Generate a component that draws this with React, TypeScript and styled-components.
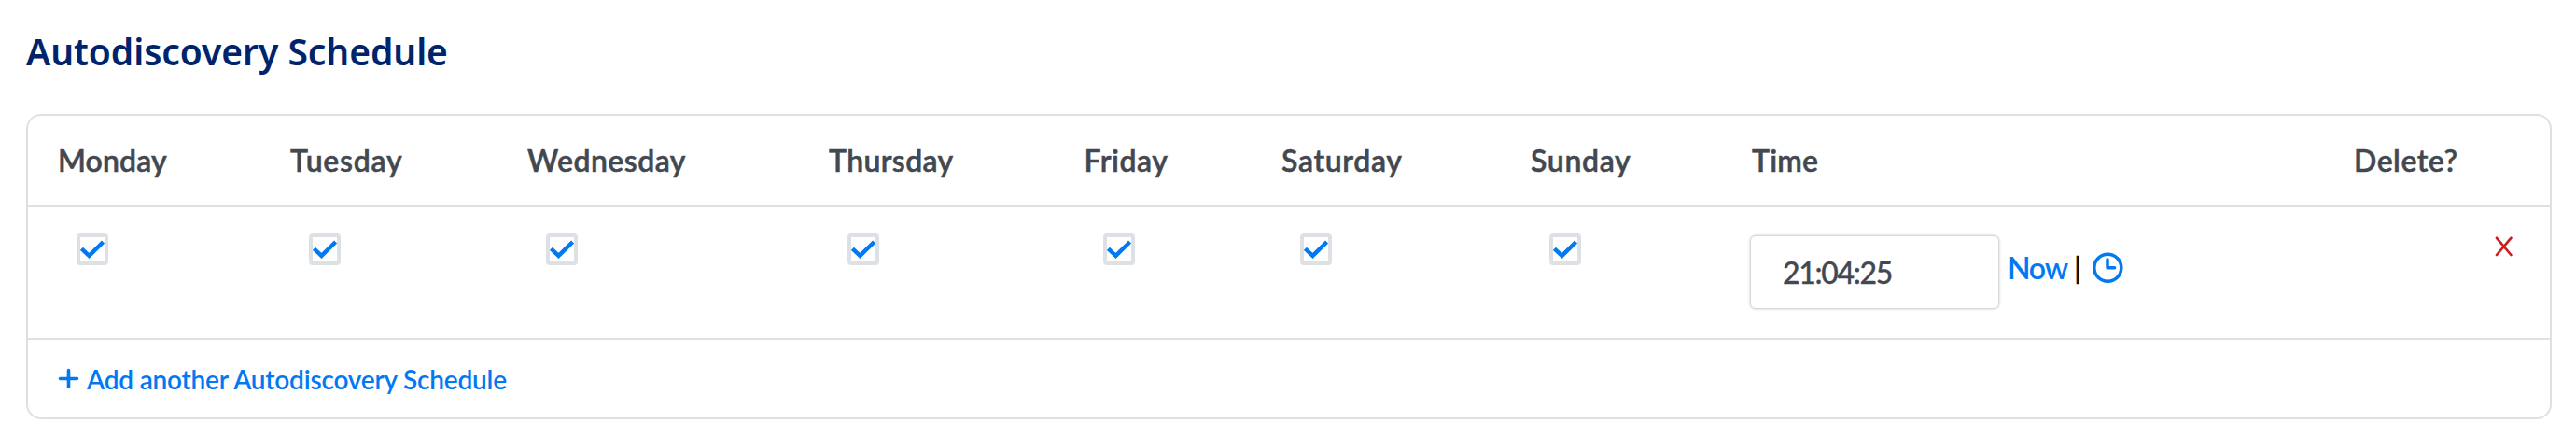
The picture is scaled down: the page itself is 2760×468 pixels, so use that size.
import React, { useState } from "react";
import styled, { createGlobalStyle } from "styled-components";

const GlobalStyle = createGlobalStyle`
  *, *::before, *::after { box-sizing: border-box; }
  body {
    margin: 0;
    background: #fff;
    color: #434850;
    font-family: Lato, "Open Sans", sans-serif;
  }
`;

const line = "#dde1e6";
const blue = "#0079f2";

const Page = styled.main`
  width: 2760px;
  height: 468px;
  padding: 28px 26px 19px 28px;
  display: flex;
  flex-direction: column;
`;

const Title = styled.h2`
  margin: 0 0 40px;
  font: 600 39px/54px "Noto Sans", sans-serif;
  letter-spacing: -0.05px;
  color: #00246b;
`;

const Card = styled.section`
  height: 327px;
  border: 2px solid ${line};
  border-radius: 16px;
`;

const Row = styled.div`
  display: grid;
  grid-template-columns: 249px 254px 323px 273.5px 211.5px 267px 237px 645px 1fr;
  border-bottom: 2px solid ${line};
`;

const HeaderRow = styled(Row)`
  height: 98px;
  align-items: center;
  padding-bottom: 1px;
`;

const BodyRow = styled(Row)`
  height: 142px;
`;

const HeaderCell = styled.div<{ $tracking: number }>`
  padding-left: 32px;
  font-size: 32px;
  line-height: 38px;
  font-weight: 600;
  letter-spacing: ${(p) => p.$tracking}px;
  white-space: nowrap;
  -webkit-text-stroke: 0.5px currentColor;
`;

const DayCell = styled.div`
  padding: 28px 0 0 52px;
`;

const CheckButton = styled.button`
  display: block;
  width: 34px;
  height: 34px;
  padding: 0;
  border: 4px solid ${line};
  border-radius: 4px;
  background: #fff;

  svg { display: block; }
`;

const TimeCell = styled.div`
  display: flex;
  align-items: flex-start;
  padding: 30px 0 0 30px;
`;

const TimeInput = styled.input`
  width: 267px;
  height: 79px;
  padding: 0 34px 1px;
  border: 1px solid #d9d9d9;
  border-radius: 6px;
  box-shadow: 0 0 3px rgba(0, 0, 0, 0.22);
  outline: none;
  background: #fff;
  color: #434850;
  font: 500 32px/38px Lato, sans-serif;
  letter-spacing: -1.3px;
  -webkit-text-stroke: 0.3px currentColor;
`;

const NowLink = styled.a`
  margin: 16px 0 0 9px;
  width: 71px;
  color: ${blue};
  font-size: 32px;
  line-height: 38px;
  font-weight: 600;
  letter-spacing: -1.2px;
`;

const Divider = styled.span`
  margin-top: 16px;
  width: 20px;
  color: #111;
  font: 400 32px/36px "Liberation Sans", sans-serif;
  -webkit-text-stroke: 0.4px currentColor;
`;

const ClockIcon = styled.svg`
  margin-top: 18px;
  flex: none;
`;

const DeleteCell = styled.div`
  display: flex;
  justify-content: flex-end;
  padding: 31px 39px 0 0;
`;

const Footer = styled.div`
  height: 83px;
  display: flex;
  align-items: center;
  padding-left: 32px;
`;

const AddLink = styled.a`
  display: flex;
  align-items: center;
  gap: 8px;
  color: ${blue};
  font-size: 28px;
  line-height: 34px;
  font-weight: 600;
  letter-spacing: -0.2px;
`;

const days = [
  { name: "Monday", tracking: 0.1 },
  { name: "Tuesday", tracking: 0.75 },
  { name: "Wednesday", tracking: 0.45 },
  { name: "Thursday", tracking: 0.35 },
  { name: "Friday", tracking: 0.5 },
  { name: "Saturday", tracking: 0.65 },
  { name: "Sunday", tracking: 0.65 },
];

function DayCheckbox({ label }: { label: string }) {
  const [checked, setChecked] = useState(true);
  return (
    <CheckButton role="checkbox" aria-checked={checked} aria-label={label} onClick={() => setChecked(!checked)}>
      {checked && (
        <svg width="26" height="26" viewBox="0 0 26 26" fill="none">
          <path d="M1.4 12.3 9.5 19.9 24.6 5" stroke={blue} strokeWidth="4.4" />
        </svg>
      )}
    </CheckButton>
  );
}

export default function App() {
  const [time, setTime] = useState("21:04:25");
  return (
    <Page>
      <GlobalStyle />
      <Title>Autodiscovery Schedule</Title>
      <Card>
        <HeaderRow>
          {days.map((d) => (
            <HeaderCell key={d.name} $tracking={d.tracking}>{d.name}</HeaderCell>
          ))}
          <HeaderCell $tracking={0.2}>Time</HeaderCell>
          <HeaderCell $tracking={0.5}>Delete?</HeaderCell>
        </HeaderRow>
        <BodyRow>
          {days.map((d) => (
            <DayCell key={d.name}>
              <DayCheckbox label={d.name} />
            </DayCell>
          ))}
          <TimeCell>
            <TimeInput value={time} onChange={(e) => setTime(e.target.value)} />
            <NowLink>Now</NowLink>
            <Divider>|</Divider>
            <ClockIcon width="33" height="33" viewBox="0 0 33 33" fill="none" stroke={blue} strokeWidth="3.5">
              <circle cx="16.3" cy="16.7" r="14.5" />
              <path d="M16 8v8.7h7.6" strokeLinecap="round" strokeLinejoin="round" />
            </ClockIcon>
          </TimeCell>
          <DeleteCell>
            <svg width="20" height="22" viewBox="0 0 20 22" fill="none" stroke="#c9201f" strokeWidth="2.7" strokeLinecap="round">
              <path d="M2 1.8 17.4 20M17.4 1.8 2 20" />
            </svg>
          </DeleteCell>
        </BodyRow>
        <Footer>
          <AddLink>
            <svg width="23" height="23" viewBox="0 0 23 23" fill="none" stroke={blue} strokeWidth="3.6" strokeLinecap="round">
              <path d="M11.5 2.5v18M2.5 11.5h18" />
            </svg>
            Add another Autodiscovery Schedule
          </AddLink>
        </Footer>
      </Card>
    </Page>
  );
}
